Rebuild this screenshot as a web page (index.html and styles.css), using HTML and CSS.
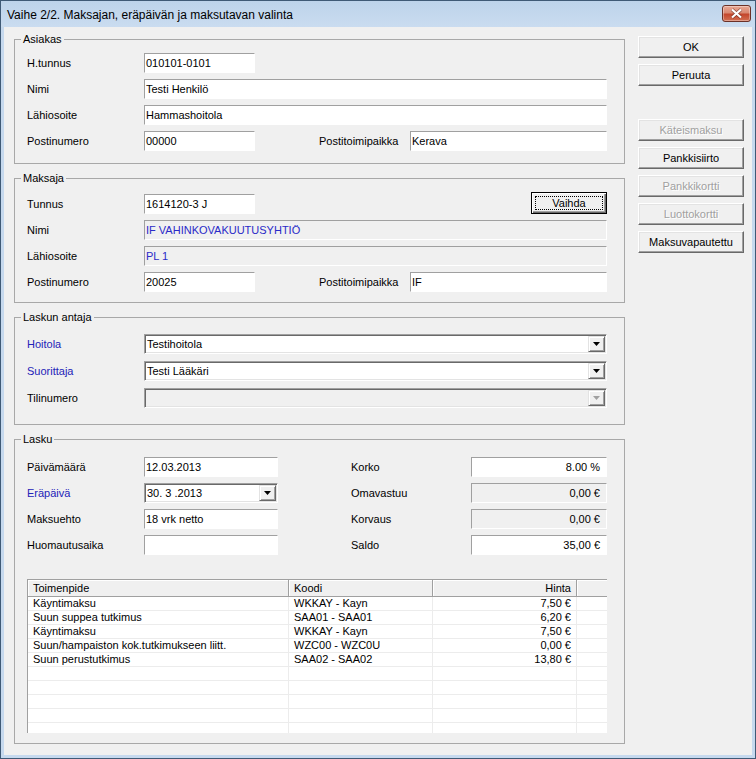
FILE: index.html
```html
<!DOCTYPE html>
<html lang="fi">
<head>
<meta charset="utf-8">
<title>Vaihe 2/2</title>
<link rel="stylesheet" href="styles.css">
</head>
<body>
<div class="window">
  <div class="titlebar">
    <div class="title">Vaihe 2/2. Maksajan, eräpäivän ja maksutavan valinta</div>
    <div class="close">
      <svg width="13" height="11" viewBox="0 0 13 11"><path d="M2 1.5 L11 9.5 M11 1.5 L2 9.5" stroke="#5a2018" stroke-width="3.6" fill="none" opacity=".6"/><path d="M2 1.5 L11 9.5 M11 1.5 L2 9.5" stroke="#fff" stroke-width="2.2" fill="none"/></svg>
    </div>
  </div>
  <div class="client">
    <div class="groups">
      <fieldset class="group">
        <legend>Asiakas</legend>
        <div class="rows g1">
          <div class="row"><span class="lbl">H.tunnus</span><span class="edit short">010101-0101</span></div>
          <div class="row"><span class="lbl">Nimi</span><span class="edit fill">Testi Henkilö</span></div>
          <div class="row"><span class="lbl">Lähiosoite</span><span class="edit fill">Hammashoitola</span></div>
          <div class="row"><span class="lbl">Postinumero</span><span class="edit short">00000</span><span class="lbl lbl-city">Postitoimipaikka</span><span class="edit fill">Kerava</span></div>
        </div>
      </fieldset>
      <fieldset class="group">
        <legend>Maksaja</legend>
        <div class="rows g2">
          <div class="row"><span class="lbl">Tunnus</span><span class="edit short">1614120-3 J</span><span class="btn btn-default vaihda"><span class="focus">Vaihda</span></span></div>
          <div class="row"><span class="lbl">Nimi</span><span class="edit fill ro blue">IF VAHINKOVAKUUTUSYHTIÖ</span></div>
          <div class="row"><span class="lbl">Lähiosoite</span><span class="edit fill ro blue">PL 1</span></div>
          <div class="row"><span class="lbl">Postinumero</span><span class="edit short">20025</span><span class="lbl lbl-city">Postitoimipaikka</span><span class="edit fill">IF</span></div>
        </div>
      </fieldset>
      <fieldset class="group">
        <legend>Laskun antaja</legend>
        <div class="rows g3">
          <div class="row"><span class="lbl blue">Hoitola</span><span class="combo fill"><span class="ctext">Testihoitola</span><span class="drop"><svg width="7" height="4" viewBox="0 0 7 4"><path d="M0 0H7L3.5 4Z" fill="#000"/></svg></span></span></div>
          <div class="row"><span class="lbl blue">Suorittaja</span><span class="combo fill"><span class="ctext">Testi Lääkäri</span><span class="drop"><svg width="7" height="4" viewBox="0 0 7 4"><path d="M0 0H7L3.5 4Z" fill="#000"/></svg></span></span></div>
          <div class="row"><span class="lbl">Tilinumero</span><span class="combo fill disabled"><span class="ctext"></span><span class="drop"><svg width="7" height="4" viewBox="0 0 7 4"><path d="M0 0H7L3.5 4Z" fill="#a0a0a0"/></svg></span></span></div>
        </div>
      </fieldset>
      <fieldset class="group">
        <legend>Lasku</legend>
        <div class="rows g4">
          <div class="row"><span class="lbl">Päivämäärä</span><span class="edit mid">12.03.2013</span><span class="lbl lbl-r">Korko</span><span class="edit fill num">8.00 %</span></div>
          <div class="row"><span class="lbl blue">Eräpäivä</span><span class="combo mid"><span class="ctext">30. 3 .2013</span><span class="drop"><svg width="7" height="4" viewBox="0 0 7 4"><path d="M0 0H7L3.5 4Z" fill="#000"/></svg></span></span><span class="lbl lbl-r">Omavastuu</span><span class="edit fill num ro">0,00 €</span></div>
          <div class="row"><span class="lbl">Maksuehto</span><span class="edit mid">18 vrk netto</span><span class="lbl lbl-r">Korvaus</span><span class="edit fill num ro">0,00 €</span></div>
          <div class="row"><span class="lbl">Huomautusaika</span><span class="edit mid"></span><span class="lbl lbl-r">Saldo</span><span class="edit fill num">35,00 €</span></div>
          <div class="grid">
            <div class="ghead">
              <span class="hcell">Toimenpide</span>
              <span class="hcell">Koodi</span>
              <span class="hcell right">Hinta</span>
              <span class="hcell last"></span>
            </div>
            <div class="trow"><span class="cell">Käyntimaksu</span><span class="cell">WKKAY - Kayn</span><span class="cell right">7,50 €</span><span class="cell last"></span></div>
            <div class="trow"><span class="cell">Suun suppea tutkimus</span><span class="cell">SAA01 - SAA01</span><span class="cell right">6,20 €</span><span class="cell last"></span></div>
            <div class="trow"><span class="cell">Käyntimaksu</span><span class="cell">WKKAY - Kayn</span><span class="cell right">7,50 €</span><span class="cell last"></span></div>
            <div class="trow"><span class="cell">Suun/hampaiston kok.tutkimukseen liitt.</span><span class="cell">WZC00 - WZC0U</span><span class="cell right">0,00 €</span><span class="cell last"></span></div>
            <div class="trow"><span class="cell">Suun perustutkimus</span><span class="cell">SAA02 - SAA02</span><span class="cell right">13,80 €</span><span class="cell last"></span></div>
            <div class="trow"><span class="cell"></span><span class="cell"></span><span class="cell"></span><span class="cell last"></span></div>
            <div class="trow"><span class="cell"></span><span class="cell"></span><span class="cell"></span><span class="cell last"></span></div>
            <div class="trow"><span class="cell"></span><span class="cell"></span><span class="cell"></span><span class="cell last"></span></div>
            <div class="trow"><span class="cell"></span><span class="cell"></span><span class="cell"></span><span class="cell last"></span></div>
            <div class="trow"><span class="cell"></span><span class="cell"></span><span class="cell"></span><span class="cell last"></span></div>
          </div>
        </div>
      </fieldset>
    </div>
    <div class="buttons">
      <span class="btn">OK</span>
      <span class="btn">Peruuta</span>
      <span class="btn dis sep">Käteismaksu</span>
      <span class="btn">Pankkisiirto</span>
      <span class="btn dis">Pankkikortti</span>
      <span class="btn dis">Luottokortti</span>
      <span class="btn">Maksuvapautettu</span>
    </div>
  </div>
</div>
</body>
</html>
```
FILE: styles.css
```css
* { box-sizing: border-box; }
html, body { margin: 0; padding: 0; background: #fff; }
body { font-family: "Liberation Sans", Arial, sans-serif; font-size: 11px; color: #000; }

.window {
  width: 756px; height: 759px;
  border: 1px solid #3f5a76;
  background: #c6d9ee;
  display: flex; flex-direction: column;
  overflow: hidden;
}
.titlebar {
  flex: none; height: 26px;
  display: flex; align-items: flex-start;
  padding-left: 6px;
  background: linear-gradient(#bdd3ea, #cadcf0);
}
.title { flex: 1; font-size: 12px; line-height: 24px; margin-top: 2px; white-space: nowrap; color: #000; }
.close {
  flex: none; width: 29px; height: 17px;
  margin: 4px 4px 0 0;
  border: 1px solid #6b3128; border-radius: 3px;
  background: linear-gradient(#e8a896 0%, #d98871 45%, #c4462c 55%, #d26f52 100%);
  box-shadow: inset 0 0 0 1px rgba(255,255,255,.35);
  display: flex; align-items: center; justify-content: center;
}

.client {
  flex: 1;
  margin: 0 3px 3px;
  background: #f0f0f0;
  display: flex; align-items: flex-start;
  padding: 6px 0 0 10px;
  gap: 13px;
}
.groups { flex: none; width: 611px; display: flex; flex-direction: column; gap: 8px; }

.group { margin: 0; padding: 0; min-width: 0; border: 1px solid #a8a8a8; }
.group legend { margin-left: 6px; padding: 0 2px; line-height: 13px; font-size: 11px; }

.rows { display: flex; flex-direction: column; gap: 6px; padding: 0 17px 0 12px; }
.g1 { padding-top: 7px; padding-bottom: 12px; }
.g2 { padding-top: 9px; padding-bottom: 10px; }
.g3 { padding-top: 10px; padding-bottom: 16px; gap: 7px; }
.g4 { padding-top: 11px; padding-bottom: 10px; }

.row { display: flex; align-items: flex-start; height: 20px; }
.lbl { flex: none; width: 117px; line-height: 20px; white-space: nowrap; }
.lbl-city { width: 91px; margin-left: 64px; }
.lbl-r { width: 120px; margin-left: 73px; }
.blue { color: #2323b8; }

.edit {
  flex: none; height: 20px;
  border: 1px solid; border-color: #a0a0a0 #fff #fff #a0a0a0;
  background: #fff;
  padding: 0 6px 0 1px;
  line-height: 18px; white-space: nowrap; overflow: hidden;
}
.edit.ro { background: #f0f0f0; }
.edit.ro.blue { color: #2a2ac8; }
.short { width: 111px; }
.mid { width: 134px; }
.fill { flex: 1; }
.num { text-align: right; }

.combo {
  flex: none; height: 20px;
  display: flex;
  border: 1px solid; border-color: #a0a0a0 #fff #fff #a0a0a0;
  box-shadow: inset 1px 1px #696969, inset -1px -1px #e3e3e3;
  background: #fff;
  padding: 1px;
}
.combo.fill { flex: 1; }
.combo.disabled { background: #f0f0f0; }
.ctext { flex: 1; padding-left: 1px; line-height: 16px; white-space: nowrap; overflow: hidden; }
.drop {
  flex: none; width: 17px; height: 16px;
  background: #f0f0f0;
  border: 1px solid; border-color: #e3e3e3 #696969 #696969 #e3e3e3;
  box-shadow: inset 1px 1px #fff, inset -1px -1px #a0a0a0;
  display: flex; align-items: center; justify-content: center;
}

.btn {
  flex: none;
  display: flex; align-items: center; justify-content: center;
  width: 106px; height: 22px;
  background: #f0f0f0;
  border: 1px solid; border-color: #fff #696969 #696969 #fff;
  box-shadow: inset -1px -1px #a0a0a0, inset 1px 1px #e3e3e3;
  white-space: nowrap;
}
.btn.dis { color: #a0a0a0; text-shadow: 1px 1px 0 #fff; }
.btn-default {
  border-color: #000;
  box-shadow: inset 1px 1px #fff, inset -1px -1px #696969, inset -2px -2px #a0a0a0;
}
.vaihda { width: 76px; margin-left: auto; margin-top: -2px; align-items: stretch; padding: 3px; }
.focus { flex: 1; border: 1px dotted #000; display: flex; align-items: center; justify-content: center; line-height: 12px; }

.buttons { flex: none; width: 106px; margin-top: 3px; display: flex; flex-direction: column; gap: 6px; }
.buttons .sep { margin-top: 27px; }

.grid {
  margin-top: 18px;
  height: 154px;
  border-top: 1px solid #a0a0a0; border-left: 1px solid #a0a0a0;
  background: #fff;
  display: flex; flex-direction: column;
  overflow: hidden;
}
.ghead, .trow { flex: none; display: grid; grid-template-columns: 261px 144px 144px 1fr; }
.hcell {
  height: 17px; line-height: 16px; padding: 0 5px;
  background: #f0f0f0;
  border-right: 1px solid #a0a0a0; border-bottom: 1px solid #a0a0a0;
  box-shadow: inset 1px 1px #fff;
  white-space: nowrap;
}
.hcell.last { border-right: 0; }
.trow { height: 14px; }
.cell {
  height: 14px; line-height: 13px; padding: 0 5px;
  border-right: 1px solid #ececec; border-bottom: 1px solid #ececec;
  white-space: nowrap; overflow: hidden;
}
.cell.last { border-right: 0; }
.right { text-align: right; }
```
